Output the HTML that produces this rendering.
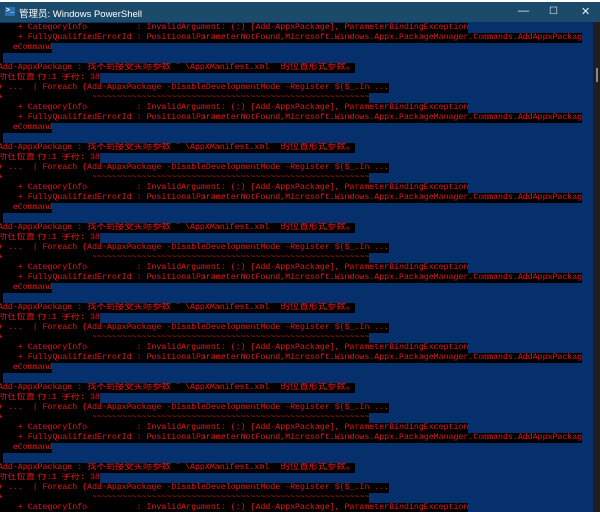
<!DOCTYPE html>
<html><head><meta charset="utf-8"><style>
html,body{margin:0;padding:0;width:600px;height:512px;overflow:hidden;background:#fff;}
#tb{position:absolute;left:0;top:2px;width:600px;height:20px;background:#1c4a6a;color:#fff;font:9.5px "Liberation Sans","Noto Sans CJK SC",sans-serif;}
#tb .t{position:absolute;left:19px;top:4px;}
#tb .ic{position:absolute;left:5px;top:5px;width:10px;height:9px;background:#2a6fb0;color:#fff;font:bold 7px "Liberation Mono",monospace;line-height:9px;text-align:center;}
#tb .b{position:absolute;top:3px;font:11px "Liberation Sans",sans-serif;color:#e8eef2;}
#con{position:absolute;left:0;top:22px;width:593px;height:490px;background:#06306c;overflow:hidden;}
#sb{position:absolute;left:593px;top:22px;width:7px;height:490px;background:#1e1e1e;}
#sb i{position:absolute;left:3px;top:46px;width:2px;height:14px;background:#888;}
.l{position:relative;left:-2px;top:1px;height:10px;line-height:10px;white-space:pre;font-family:"Liberation Mono",monospace;font-size:8.25px;color:#e5171b;overflow:hidden;}
.l span{background:#000;padding:1px 0;}
.l b{font-weight:normal;font-size:9.3px;line-height:0;font-family:"Noto Sans CJK SC",sans-serif;background:#000;}
</style></head><body>
<div id="tb"><div class="ic">&gt;_</div><div class="t">管理员: Windows PowerShell</div>
<div class="b" style="left:518px">—</div><div class="b" style="left:549px;font-size:10px;top:4px">☐</div><div class="b" style="left:581px">✕</div></div>
<div id="con">
<div class="l"><span>    + CategoryInfo          : InvalidArgument: (:) [Add-AppxPackage], ParameterBindingException</span></div>
<div class="l"><span>    + FullyQualifiedErrorId : PositionalParameterNotFound,Microsoft.Windows.Appx.PackageManager.Commands.AddAppxPackag</span></div>
<div class="l"><span>   eCommand</span></div>
<div class="l"><span> </span></div>
<div id="blocks"></div>
</div>
<div id="sb"><i></i></div>
<script>
var b='<div class="l"><span>Add-AppxPackage : <b>找不到接受实际参数“</b> \\AppXManifest.xml<b>” 的位置形式参数。</b></span></div>'+
'<div class="l"><span><b>所在位置 行</b>:1 <b>字符</b>: 38</span></div>'+
'<div class="l"><span>+ ...  | Foreach {Add-AppxPackage -DisableDevelopmentMode -Register $($_.In ...</span></div>'+
'<div class="l"><span>+                  ~~~~~~~~~~~~~~~~~~~~~~~~~~~~~~~~~~~~~~~~~~~~~~~~~~~~~~~~</span></div>'+
'<div class="l"><span>    + CategoryInfo          : InvalidArgument: (:) [Add-AppxPackage], ParameterBindingException</span></div>'+
'<div class="l"><span>    + FullyQualifiedErrorId : PositionalParameterNotFound,Microsoft.Windows.Appx.PackageManager.Commands.AddAppxPackag</span></div>'+
'<div class="l"><span>   eCommand</span></div>'+
'<div class="l"><span> </span></div>';
var h='';for(var i=0;i<6;i++)h+=b;document.getElementById('blocks').innerHTML=h;
</script>
</body></html>
